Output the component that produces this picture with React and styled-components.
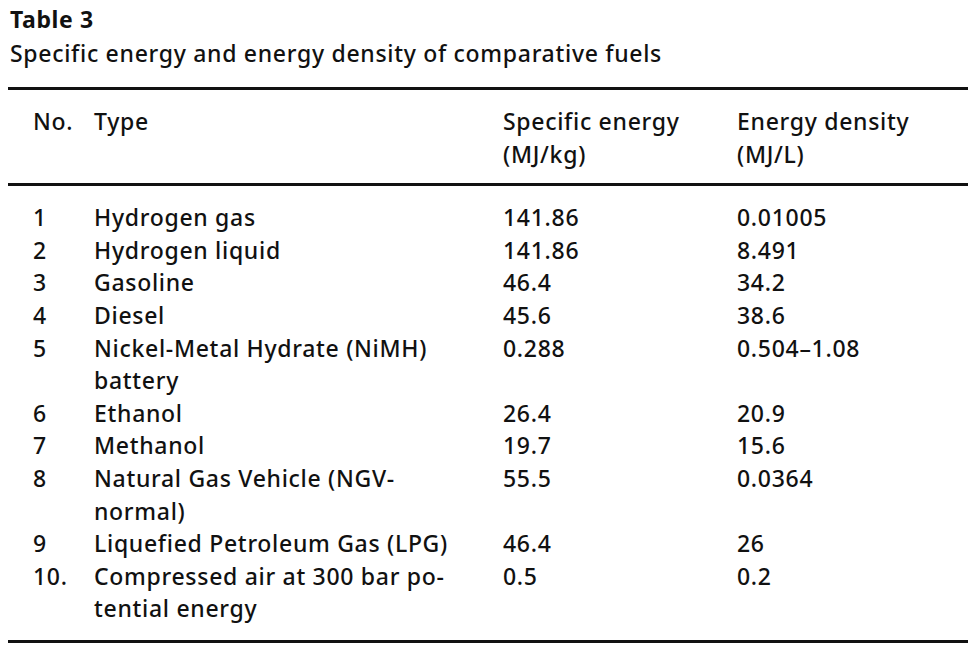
import React from "react";
import styled, { createGlobalStyle } from "styled-components";

const Global = createGlobalStyle`
  html, body { margin: 0; padding: 0; background: #fff; }
  body { font-family: "Noto Sans", "Open Sans", sans-serif; color: #111; }
`;

const Page = styled.div`
  padding: 0 12px 0 8px;
  width: 960px;
`;

const Title = styled.div`
  font-weight: 700;
  font-size: 23px;
  line-height: 34px;
  padding-left: 2px;
  margin-top: 2px;
  letter-spacing: 0.6px;
`;

const Caption = styled.div`
  font-size: 23px;
  font-weight: 500;
  line-height: 34px;
  padding-left: 2px;
  letter-spacing: 0.7px;
`;

const Rule = styled.div`
  height: 3px;
  background: #111;
  margin-top: ${(p) => p.$top || 0}px;
`;

const Grid = styled.div`
  display: grid;
  grid-template-columns: 61px 409px 234px 1fr;
  padding-left: 25px;
  font-size: 23px;
  font-weight: 500;
  letter-spacing: 0.7px;
  line-height: 32.6px;
  padding-top: ${(p) => p.$pt}px;
  padding-bottom: ${(p) => p.$pb}px;
`;

const Cell = styled.div`
  padding-right: 8px;
  white-space: nowrap;
`;

const rows = [
  ["1", "Hydrogen gas", "141.86", "0.01005"],
  ["2", "Hydrogen liquid", "141.86", "8.491"],
  ["3", "Gasoline", "46.4", "34.2"],
  ["4", "Diesel", "45.6", "38.6"],
  ["5", ["Nickel-Metal Hydrate (NiMH)", "battery"], "0.288", "0.504\u20131.08"],
  ["6", "Ethanol", "26.4", "20.9"],
  ["7", "Methanol", "19.7", "15.6"],
  ["8", ["Natural Gas Vehicle (NGV-", "normal)"], "55.5", "0.0364"],
  ["9", "Liquefied Petroleum Gas (LPG)", "46.4", "26"],
  ["10.", ["Compressed air at 300 bar po-", "tential energy"], "0.5", "0.2"],
];

const Lines = ({ v }) =>
  Array.isArray(v) ? v.map((l, i) => <div key={i}>{l}</div>) : v;

export default function App() {
  return (
    <Page>
      <Global />
      <Title>Table 3</Title>
      <Caption>Specific energy and energy density of comparative fuels</Caption>
      <Rule $top={17} />
      <Grid $pt={15} $pb={13}>
        <Cell>No.</Cell>
        <Cell>Type</Cell>
        <Cell>
          <div>Specific energy</div>
          <div>(MJ/kg)</div>
        </Cell>
        <Cell>
          <div>Energy density</div>
          <div>(MJ/L)</div>
        </Cell>
      </Grid>
      <Rule />
      <Grid $pt={15} $pb={15}>
        {rows.map((r, i) => (
          <React.Fragment key={i}>
            {r.map((c, j) => (
              <Cell key={j}>
                <Lines v={c} />
              </Cell>
            ))}
          </React.Fragment>
        ))}
      </Grid>
      <Rule />
    </Page>
  );
}
